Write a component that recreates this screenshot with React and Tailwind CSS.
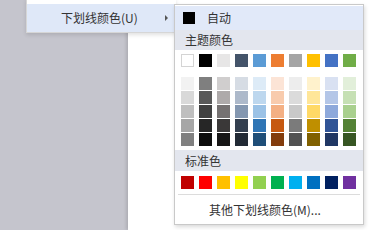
import React from "react"

const THEME_TOP = ["#FFFFFF", "#000000", "#E7E6E6", "#44546A", "#5B9BD5", "#ED7D31", "#A5A5A5", "#FFC000", "#4472C4", "#70AD47"]

const THEME_SHADES = [
  ["#F2F2F2", "#D9D9D9", "#BFBFBF", "#A6A6A6", "#808080"],
  ["#7F7F7F", "#595959", "#404040", "#262626", "#0D0D0D"],
  ["#D0CECE", "#AEAAAA", "#757171", "#3A3838", "#171616"],
  ["#D6DCE4", "#ADB9CA", "#8497B0", "#333F4F", "#222A35"],
  ["#DDEBF7", "#BDD7EE", "#9BC2E6", "#2F75B5", "#1F4E78"],
  ["#FCE4D6", "#F8CBAD", "#F4B084", "#C65911", "#833C0C"],
  ["#EDEDED", "#DBDBDB", "#C9C9C9", "#7B7B7B", "#525252"],
  ["#FFF2CC", "#FFE699", "#FFD966", "#BF8F00", "#806000"],
  ["#D9E1F2", "#B4C6E7", "#8EA9DB", "#305496", "#203764"],
  ["#E2EFDA", "#C6E0B4", "#A9D08E", "#548235", "#375623"],
]

const STANDARD = ["#C00000", "#FF0000", "#FFC000", "#FFFF00", "#92D050", "#00B050", "#00B0F0", "#0070C0", "#002060", "#7030A0"]

const FONT = { fontFamily: '"Noto Sans CJK SC", "Noto Sans", sans-serif' }

function Swatch({ color, bordered }) {
  return (
    <div
      className={"w-[13px] h-[13px] " + (bordered ? "border border-[#d4d4d4]" : "")}
      style={{ backgroundColor: color }}
    />
  )
}

export default function App() {
  return (
    <div className="relative w-[372px] h-[230px] flex overflow-hidden text-[12px] text-[#333]" style={FONT}>
      {/* workspace background + page */}
      <div className="w-[128px] h-full bg-[#c5c5cd]" />
      <div className="flex-1 h-full bg-white shadow-[-2px_0_3px_rgba(0,0,0,0.12)]" />

      {/* parent menu */}
      <div className="absolute left-[26px] top-[-2px] w-[150px] bg-white pt-[6px] border-l border-b border-[#d6d6d6] shadow-[0_2px_4px_rgba(0,0,0,0.12)]">
        <div className="h-[28px] bg-[#dfe8f8] flex items-center">
          <span className="ml-[34px] leading-none">下划线颜色(U)</span>
          <span className="ml-auto mr-[8px] w-0 h-0 border-y-[3px] border-y-transparent border-l-[3px] border-l-[#555]" />
        </div>
      </div>

      {/* colour submenu */}
      <div className="absolute left-[174px] top-[4px] w-[190px] h-[221px] bg-white border border-[#c9c9c9] shadow-[1px_2px_4px_rgba(0,0,0,0.15)] flex flex-col">
        <div className="mt-[1px] h-[24px] bg-[#e1e9f9] flex items-center">
          <div className="ml-[8px] w-[12px] h-[12px] bg-black" />
          <span className="ml-[12px] leading-none">自动</span>
        </div>

        <div className="h-[20px] bg-[#e3e6ee] flex items-center pl-[10px] leading-none">主题颜色</div>

        <div className="mt-[4px] pl-[6px] flex gap-[5px]">
          {THEME_TOP.map((c, i) => (
            <Swatch key={c} color={c} bordered={i === 0} />
          ))}
        </div>

        <div className="mt-[10px] pl-[6px] flex gap-[5px]">
          {THEME_SHADES.map((col, i) => (
            <div key={i} className="flex flex-col gap-[1px]">
              {col.map((c) => (
                <Swatch key={c} color={c} />
              ))}
            </div>
          ))}
        </div>

        <div className="mt-[4px] h-[21px] bg-[#e3e6ee] flex items-center pl-[10px] leading-none">标准色</div>

        <div className="mt-[5px] pl-[6px] flex gap-[5px]">
          {STANDARD.map((c) => (
            <Swatch key={c} color={c} />
          ))}
        </div>

        <div className="mt-[5px] mx-[3px] h-px bg-[#dcdcdc]" />

        <div className="flex-1 flex items-center pl-[34px] leading-none">其他下划线颜色(M)...</div>
      </div>
    </div>
  )
}
